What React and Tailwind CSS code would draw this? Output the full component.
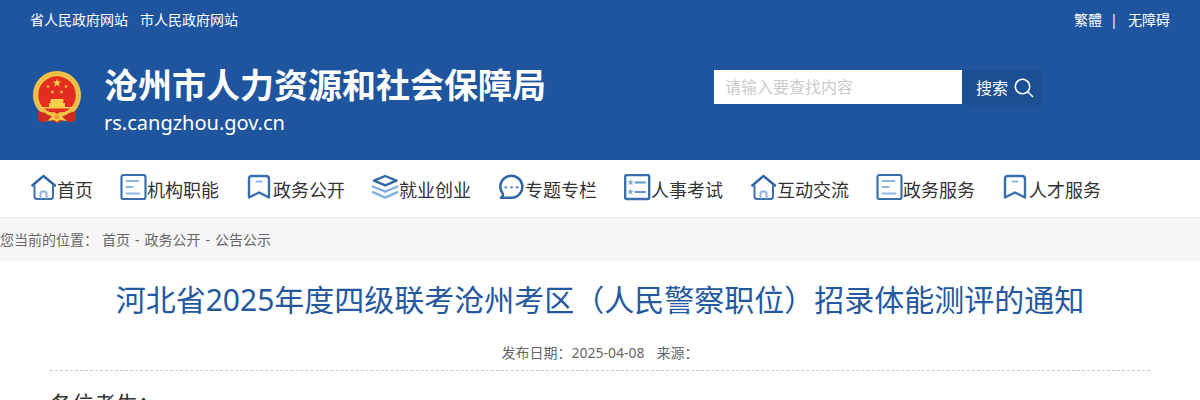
import React from "react";

const HomeIcon = () => (
  <>
    <path d="M4.5 12V22.5Q4.5 25 7 25H20.5Q23 25 23 22.5V12" stroke="#3a6fac" />
    <path d="M10.5 24V19.5Q10.5 17.5 12.5 17.5H14.5Q16.5 17.5 16.5 19.5V24" stroke="#8db6e6" />
    <path d="M2.3 11.5L13.5 2L25 11.5" stroke="#2f66a5" strokeWidth="2.4" />
  </>
);

const DocIcon = () => (
  <>
    <rect x="1.5" y="1" width="24" height="24" rx="2" stroke="#3a6fac" strokeWidth="2.2" />
    <path d="M6.5 7H18.5M6.5 13H12.5M6.5 19.5H19.5" stroke="#8db6e6" />
  </>
);

const BookmarkIcon = () => (
  <>
    <path d="M3 5Q3 2 6 2H20Q23 2 23 5V23.5L13 18.5L3 23.5Z" stroke="#3a6fac" strokeWidth="2.4" />
    <path d="M10.5 7.5H15.5" stroke="#8db6e6" />
  </>
);

const LayersIcon = () => (
  <>
    <path d="M13.2 2L24.5 6.7L13.2 11.4L2 6.7Z" stroke="#2f66a5" strokeWidth="2.4" />
    <path d="M1 12.5L13.2 17.7L25.5 12.5M1 18.2L13.2 23.7L25.5 18.2" stroke="#80afe2" strokeWidth="2.4" />
  </>
);

const ChatIcon = () => (
  <>
    <path d="M3 23.8H13.5A11 11 0 1 0 5 20Q5.3 22.2 3 23.8Z" stroke="#2f66a5" strokeWidth="2.5" />
    <g fill="#6094cf">
      <circle cx="7.8" cy="13.3" r="1.4" />
      <circle cx="13.5" cy="13.3" r="1.4" />
      <circle cx="19.2" cy="13.3" r="1.4" />
    </g>
  </>
);

const ListIcon = () => (
  <>
    <rect x="1.2" y="1" width="24" height="24" rx="1.5" stroke="#3a6fac" strokeWidth="2.4" />
    <path d="M11.5 8.5H21M11.5 18H21" stroke="#6094cf" strokeWidth="2.2" />
    <g fill="#80afe2">
      <path d="M6.5 5L7.4 7.1L9.7 7.3L8 8.8L8.5 11L6.5 9.9L4.5 11L5 8.8L3.7 7.3L5.6 7.1Z" />
      <path d="M6.5 14.5L7.4 16.6L9.7 16.8L8 18.3L8.5 20.5L6.5 19.4L4.5 20.5L5 18.3L3.7 16.8L5.6 16.6Z" />
    </g>
  </>
);

const navItems = [
  { label: "首页", Icon: HomeIcon },
  { label: "机构职能", Icon: DocIcon },
  { label: "政务公开", Icon: BookmarkIcon },
  { label: "就业创业", Icon: LayersIcon },
  { label: "专题专栏", Icon: ChatIcon },
  { label: "人事考试", Icon: ListIcon },
  { label: "互动交流", Icon: HomeIcon },
  { label: "政务服务", Icon: DocIcon },
  { label: "人才服务", Icon: BookmarkIcon },
];

function Star({ x, y, r }) {
  return (
    <path
      transform={`translate(${x} ${y}) scale(${r})`}
      d="M0 -1L.24 -.32L.95 -.31L.38 .12L.59 .81L0 .4L-.59 .81L-.38 .12L-.95 -.31L-.24 -.32Z"
      fill="#f6cf4d"
    />
  );
}

function Emblem() {
  return (
    <svg className="h-[54px] w-[50px] shrink-0" viewBox="0 0 50 54" aria-hidden="true">
      <path d="M7 38L6 50L12 52L17 50L25 52L33 50L38 52L44 50L43 38Z" fill="#cf2a20" />
      <circle cx="25" cy="25" r="24" fill="#f2c447" />
      <circle cx="25" cy="25" r="21.5" fill="none" stroke="#dda52f" strokeDasharray="1.5 2" />
      <circle cx="25" cy="25" r="18.8" fill="#e42c20" />
      <Star x={25} y={13} r={4.6} />
      <Star x={16} y={16.5} r={2.1} />
      <Star x={34} y={16.5} r={2.1} />
      <Star x={20.5} y={22} r={2.1} />
      <Star x={29.5} y={22} r={2.1} />
      <path d="M19 29H31L32 31.5H18ZM19 31.5H31V33H33V37H41V38.5H9V37H17V33H19Z" fill="#f6cf4d" />
      <path d="M6 41L13 43L20 40.5L25 43L30 40.5L37 43L44 41L43 50.5L38 52.5L33 50L25 53L17 50L12 52.5L7 50.5Z" fill="#cf2a20" />
      <path d="M11 38.5Q17 43 22 42L25 44L28 42Q33 43 39 38.5L36 44L30 46.5L35 51L28 50L25 52L22 50L15 51L20 46.5L14 44Z" fill="#f2c447" />
      <circle cx="25" cy="47" r="2.3" fill="#e89c2c" />
    </svg>
  );
}

export default function App() {
  return (
    <div className="h-screen overflow-hidden bg-white font-['Noto_Sans','Noto_Sans_CJK_SC',sans-serif] text-[#333]">
      <header className="bg-[#1f559f] text-white">
        <div className="flex h-10 items-center justify-between px-[30px] text-sm">
          <div className="flex gap-3">
            <a href="#">省人民政府网站</a>
            <a href="#">市人民政府网站</a>
          </div>
          <div className="flex">
            <a href="#">繁體</a>
            <span className="w-[26px] pl-2">|</span>
            <a href="#">无障碍</a>
          </div>
        </div>

        <div className="flex h-[120px] items-start pr-[158px] pl-8">
          <div className="flex flex-1 items-start gap-[22px]">
            <div className="pt-[30px]">
              <Emblem />
            </div>
            <div className="pt-[23px]">
              <h1 className="text-[34px] leading-[44px] font-bold whitespace-nowrap">沧州市人力资源和社会保障局</h1>
              <p className="text-xl leading-8">rs.cangzhou.gov.cn</p>
            </div>
          </div>
          <form className="flex items-start pt-[30px]" onSubmit={(e) => e.preventDefault()}>
            <input
              type="text"
              aria-label="搜索内容"
              placeholder="请输入要查找内容"
              className="h-[34px] w-[248px] bg-white px-[11px] text-base text-[#333] outline-none placeholder:text-[#ccc]"
            />
            <button type="submit" className="flex h-[35px] w-20 items-center gap-1.5 bg-[#1b4e93] pl-3.5 text-base">
              搜索
              <svg className="h-5 w-5" viewBox="0 0 20 20" fill="none" stroke="currentColor" strokeWidth="1.6" aria-hidden="true">
                <circle cx="8.5" cy="8.5" r="7.2" />
                <path d="M13.7 13.7L19 19" />
              </svg>
            </button>
          </form>
        </div>
      </header>

      <nav className="flex h-[57px] items-center gap-[27px] px-[30px] pt-0.5">
        {navItems.map(({ label, Icon }) => (
          <a key={label} href="#" className="flex items-center text-lg whitespace-nowrap">
            <svg className="mb-1 h-[27px] w-[27px]" viewBox="0 0 27 27" fill="none" strokeWidth="2" strokeLinejoin="round" strokeLinecap="round" aria-hidden="true">
              <Icon />
            </svg>
            {label}
          </a>
        ))}
      </nav>

      <div className="flex h-[45px] items-center border-t border-[#ececec] bg-[#f6f6f6] text-sm text-[#666]">
        <span className="w-[102px]">您当前的位置：</span>
        <div className="flex gap-[5px]">
          <a href="#">首页</a>
          <span>-</span>
          <a href="#">政务公开</a>
          <span>-</span>
          <a href="#">公告公示</a>
        </div>
      </div>

      <main className="px-[50px] pt-4">
        <h2 className="text-center text-[30px] leading-[44px] text-[#2458a0]">
          河北省2025年度四级联考沧州考区（人民警察职位）招录体能测评的通知
        </h2>
        <div className="mt-[21px] flex justify-center gap-3 border-b border-dashed border-[#ccc] pb-[7px] text-sm text-[#666]">
          <span>发布日期：2025-04-08</span>
          <span>来源：</span>
        </div>
        <p className="mt-3 text-[22px] leading-10">各位考生：</p>
      </main>
    </div>
  );
}
